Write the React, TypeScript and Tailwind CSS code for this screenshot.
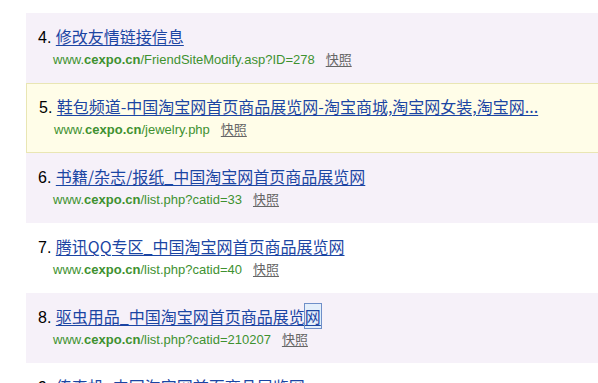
const results = [
  { n: 4, title: "修改友情链接信息", path: "/FriendSiteModify.asp?ID=278", tone: "lavender" },
  {
    n: 5,
    title: "鞋包频道-中国淘宝网首页商品展览网-淘宝商城,淘宝网女装,淘宝网...",
    path: "/jewelry.php",
    tone: "yellow",
  },
  { n: 6, title: "书籍/杂志/报纸_中国淘宝网首页商品展览网", path: "/list.php?catid=33", tone: "lavender" },
  { n: 7, title: "腾讯QQ专区_中国淘宝网首页商品展览网", path: "/list.php?catid=40", tone: "white" },
  { n: 8, title: "驱虫用品_中国淘宝网首页商品展览", last: "网", path: "/list.php?catid=210207", tone: "lavender" },
  { n: 9, title: "传真机_中国淘宝网首页商品展览网", path: "/list.php?catid=1102", tone: "white" },
];

function ResultRow({ item }: { item: (typeof results)[number] }) {
  const bg =
    item.tone === "yellow"
      ? "bg-[#fffde8] border-y border-l border-[#e9e6b4] pt-[11px]"
      : item.tone === "lavender"
        ? "bg-[#f6f1f9] pt-[12px]"
        : "bg-white pt-[12px]";
  return (
    <div className={`h-[70px] pl-[12px] ${bg}`}>
      <div className="flex items-baseline leading-[22px] whitespace-nowrap">
        <span className="text-[16px] text-black font-['Liberation_Sans',Arial,sans-serif]">{item.n}.&nbsp;</span>
        <a
          href="#"
          className="text-[16px] text-[#1b45a3] underline underline-offset-2 font-['SimSun','Noto_Sans_CJK_SC',sans-serif]"
        >
          {item.title}
          {item.last && (
            <span className="bg-[#e4effb] outline outline-1 outline-[#6f8fc8]">{item.last}</span>
          )}
        </a>
      </div>
      <div className="flex items-baseline leading-[19px] pl-[15px] whitespace-nowrap">
        <span className="text-[13px] text-[#3e9130] font-['Liberation_Sans',Arial,sans-serif]">
          www.<b>cexpo.cn</b>
          {item.path}
        </span>
        <a
          href="#"
          className="ml-[11px] text-[13px] text-[#666] underline underline-offset-2 font-['Noto_Sans_CJK_SC',sans-serif]"
        >
          快照
        </a>
      </div>
    </div>
  );
}

export default function App() {
  return (
    <div className="w-[598px] h-[383px] overflow-hidden bg-white">
      <div className="ml-[26px] pt-[13px] flex flex-col">
        {results.map((item) => (
          <ResultRow key={item.n} item={item} />
        ))}
      </div>
    </div>
  );
}
